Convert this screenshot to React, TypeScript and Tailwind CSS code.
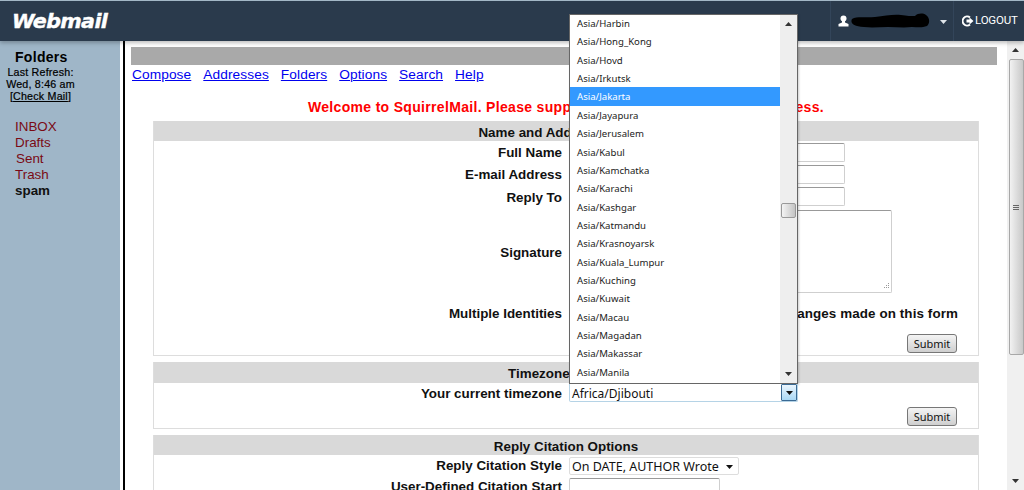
import React from "react";

const zones = ["Harbin","Hong_Kong","Hovd","Irkutsk","Jakarta","Jayapura","Jerusalem","Kabul","Kamchatka","Karachi","Kashgar","Katmandu","Krasnoyarsk","Kuala_Lumpur","Kuching","Kuwait","Macau","Magadan","Makassar","Manila"];

function Tri({ up = false, className = "", color = "#333" }: { up?: boolean; className?: string; color?: string }) {
  return (
    <svg width="7" height="4" viewBox="0 0 7 4" className={className}>
      <polygon points={up ? "3.5,0 7,4 0,4" : "0,0 7,0 3.5,4"} fill={color} />
    </svg>
  );
}

function Submit() {
  return (
    <button className="w-[50px] h-[19px] rounded-[3px] border border-[#777] bg-gradient-to-b from-[#f4f4f4] to-[#cfcfcf] text-[11px] leading-none text-[#111] font-['Noto_Sans',sans-serif]">
      Submit
    </button>
  );
}

function Row({ label, h, children, className = "", labelClass = "pt-[2px]" }: { label: string; h: number; children?: React.ReactNode; className?: string; labelClass?: string }) {
  return (
    <div className={"flex items-center " + className} style={{ height: h }}>
      <div className={"w-[408px] mr-[7px] text-right font-bold text-[13.4px] text-[#111] whitespace-nowrap " + labelClass}>{label}</div>
      {children}
    </div>
  );
}

function Field({ w, h = 19 }: { w: number; h?: number }) {
  return <div className="border border-[#cfcfcf] border-t-[#999] rounded-[2px] bg-white" style={{ width: w, height: h }} />;
}

function BoxHead({ title, h }: { title: string; h: number }) {
  return (
    <div className="bg-[#d9d9d9] text-center font-bold text-[13.4px] text-[#111] flex items-center justify-center pt-[4px]" style={{ height: h }}>
      {title}
    </div>
  );
}

export default function App() {
  return (
    <div className="relative w-[1024px] h-[490px] overflow-hidden bg-white flex flex-col font-['Liberation_Sans',sans-serif]">
      {/* header */}
      <header className="h-[41px] shrink-0 bg-[#2a3a4c] border-t border-[#a3b7c6] flex items-center shadow-[0_2px_4px_rgba(0,0,0,0.25)] z-10">
        <div className="ml-[12px] text-white font-['DejaVu_Sans',sans-serif] font-bold italic text-[20px] tracking-[-0.6px] leading-none scale-x-[1.03] origin-left [-webkit-text-stroke:0.4px_white]">Webmail</div>
        <div className="ml-auto flex items-stretch h-full">
          <div className="w-[124px] border-l border-[#33455a] border-r flex items-center pl-[7px]">
            <svg width="11" height="12" viewBox="0 0 11 12"><circle cx="5.5" cy="3.5" r="3" fill="#fff" /><path d="M4 6h3v1.5l3.5 1.5v2.5H.5V9L4 7.5z" fill="#fff" /></svg>
            <svg width="80" height="16" viewBox="0 0 80 16" className="ml-[2px]">
              <path d="M1 6C6 3 14 5 24 4c10-1 18-3 26-2 6 1 10 1 14 1 3-3 8-3 11-1 4 3 4 8 1 11-5 2-10 1-15 1-8 1-16 0-24 0-8 0-16 1-24 0C2 13 -1 10 1 6z" fill="#000" />
            </svg>
            <Tri color="#dfe5ea" className="ml-[9px] mt-[2px]" />
          </div>
          <div className="w-[70px] flex items-center pl-[8px] text-white">
            <svg width="12" height="12" viewBox="0 0 12 12"><path d="M8 2.5A4.5 4.5 0 1 0 8 9.5" fill="none" stroke="#fff" strokeWidth="2" /><path d="M4.5 4.5H7.5V2.5L11.5 6 7.5 9.5V7.5H4.5z" fill="#fff" /></svg>
            <span className="ml-[1px] text-[11.5px] tracking-[-0.2px] font-['Roboto',sans-serif]">LOGOUT</span>
          </div>
        </div>
      </header>

      <div className="flex-1 flex min-h-0">
        {/* sidebar */}
        <aside className="w-[120px] shrink-0 bg-[#9fb6c8] text-black">
          <div className="pl-[15px] pt-[8px] font-bold text-[14px] tracking-[0.3px] leading-[17px]">Folders</div>
          <div className="w-[81px] text-center text-[10.7px] tracking-[0.2px] leading-[12px] [-webkit-text-stroke:0.2px_black]">
            <div>Last Refresh:</div>
            <div>Wed, 8:46 am</div>
            <div>[<span className="underline">Check Mail</span>]</div>
          </div>
          <div className="pl-[15px] pt-[17px] text-[13.4px] leading-[16px] text-[#7a0a14]">
            <div>INBOX</div>
            <div>Drafts</div>
            <div className="pl-[1px]">Sent</div>
            <div>Trash</div>
            <div className="font-bold text-[#111]">spam</div>
          </div>
        </aside>
        <div className="w-[3px] shrink-0" />
        <div className="w-[2px] shrink-0 bg-black" />

        {/* main */}
        <main className="flex-1 min-w-0 overflow-hidden pl-[6px] pr-[10px] pt-[6px]">
          <div className="h-[18px] bg-[#a9a9a9]" />
          <nav className="h-[18px] flex items-center gap-[12px] pl-[1px] pt-[2px] text-[13.7px] tracking-[0.1px] text-[#0000ee] underline">
            <span>Compose</span><span>Addresses</span><span>Folders</span><span>Options</span><span>Search</span><span>Help</span>
          </nav>
          <div className="mt-[15px] h-[18px] text-center font-bold text-[14px] tracking-[0.32px] text-[#ff0000] leading-[18px] whitespace-nowrap pl-[4px]">
            Welcome to SquirrelMail. Please supply your full name and email address.
          </div>
          <div className="ml-[22px] mr-[18px] mt-[5px]">
            <section className="h-[235px] border border-[#ddd] border-t-0">
              <BoxHead title="Name and Address Options" h={20} />
              <Row label="Full Name" h={19} className="mt-[2px]"><Field w={276} /></Row>
              <Row label="E-mail Address" h={19} className="mt-[3px]"><Field w={276} /></Row>
              <Row label="Reply To" h={19} className="mt-[3px]" labelClass="pt-[4px]"><Field w={276} /></Row>
              <Row label="Signature" h={83} className="mt-[4px]" labelClass="pt-[4px]">
                <div className="relative">
                  <Field w={323} h={83} />
                  <svg width="8" height="8" viewBox="0 0 8 8" className="absolute right-[2px] bottom-[2px]">
                    <g fill="#999"><rect x="6" y="0" width="1" height="1" /><rect x="4" y="2" width="1" height="1" /><rect x="6" y="2" width="1" height="1" /><rect x="2" y="4" width="1" height="1" /><rect x="4" y="4" width="1" height="1" /><rect x="6" y="4" width="1" height="1" /></g>
                  </svg>
                </div>
              </Row>
              <Row label="Multiple Identities" h={18} className="mt-[11px]">
                <div className="flex-1 text-right pr-[20px] pt-[2px] font-bold text-[13.4px] tracking-[0.1px] text-[#111] whitespace-nowrap">Edit identities, discarding changes made on this form</div>
              </Row>
              <div className="mt-[12px] flex justify-end pr-[21px]"><Submit /></div>
            </section>
            <section className="mt-[6px] h-[67px] border border-[#ddd] border-t-0">
              <BoxHead title="Timezone Options" h={21} />
              <Row label="Your current timezone" h={18} className="mt-[1px]">
                <div className="w-[229px] h-[18px]" />
              </Row>
              <div className="mt-[5px] flex justify-end pr-[21px]"><Submit /></div>
            </section>
            <section className="mt-[6px] border border-[#ddd] border-t-0 h-[80px]">
              <BoxHead title="Reply Citation Options" h={20} />
              <Row label="Reply Citation Style" h={18} className="mt-[2px]" labelClass="pt-0">
                <div className="w-[170px] h-[18px] border border-[#ddd] rounded-[2px] flex items-center pl-[2px] pt-[2px] font-['Noto_Sans',sans-serif] text-[12.5px] text-[#111] whitespace-nowrap">
                  On DATE, AUTHOR Wrote
                  <Tri color="#111" className="ml-auto mr-[5px]" />
                </div>
              </Row>
              <Row label="User-Defined Citation Start" h={19} className="mt-[3px]" labelClass="pt-0"><Field w={151} /></Row>
            </section>
          </div>
        </main>

        {/* page scrollbar */}
        <div className="w-[17px] shrink-0 bg-[#f0f0f0] flex flex-col items-center">
          <Tri up className="mt-[7px]" />
          <div className="relative mt-[7px] ml-[1px] w-[15px] h-[296px] rounded-[2px] border border-[#a8a8a8] bg-gradient-to-r from-[#f2f2f2] to-[#c8c8c8] flex flex-col items-center justify-center gap-[1px]">
            <div className="w-[6px] h-[1px] bg-[#666]" />
            <div className="w-[6px] h-[1px] bg-[#666]" />
            <div className="w-[6px] h-[1px] bg-[#666]" />
          </div>
          <Tri className="mt-auto mb-[7px]" />
        </div>
      </div>

      {/* open dropdown */}
      <div className="absolute left-[569px] top-[14px] w-[229px] h-[370px] z-20 bg-white border border-[#666] flex font-['Noto_Sans',sans-serif] text-[9.6px] text-[#222] shadow-[1px_1px_2px_rgba(0,0,0,0.2)]">
        <ul className="w-[210px] -mt-[1px]">
          {zones.map((z) => (
            <li key={z} className={"h-[18.37px] leading-[20px] pl-[7px] " + (z === "Jakarta" ? "bg-[#3399ff] text-white" : "")}>Asia/{z}</li>
          ))}
        </ul>
        <div className="flex-1 bg-[#eeeeee] flex flex-col items-center">
          <Tri up className="mt-[7px]" />
          <div className="mt-[177px] w-[15px] h-[15px] rounded-[2px] border border-[#999] bg-gradient-to-r from-[#f4f4f4] to-[#c4c4c4]" />
          <Tri className="mt-auto mb-[7px]" />
        </div>
      </div>
      {/* closed select below it */}
      <div className="absolute left-[569px] top-[384px] w-[229px] h-[18px] z-20 bg-white border border-[#b5d3e6] border-t-0 rounded-b-[2px] flex items-center font-['Noto_Sans',sans-serif] text-[12px] text-[#111]">
        <span className="pl-[2px] pt-[2px]">Africa/Djibouti</span>
        <div className="ml-auto w-[16px] h-full border border-[#3a6a94] rounded-[1px] bg-gradient-to-b from-[#eaf5fd] to-[#a9d8f5] flex items-center justify-center">
          <Tri color="#111" />
        </div>
      </div>
    </div>
  );
}
